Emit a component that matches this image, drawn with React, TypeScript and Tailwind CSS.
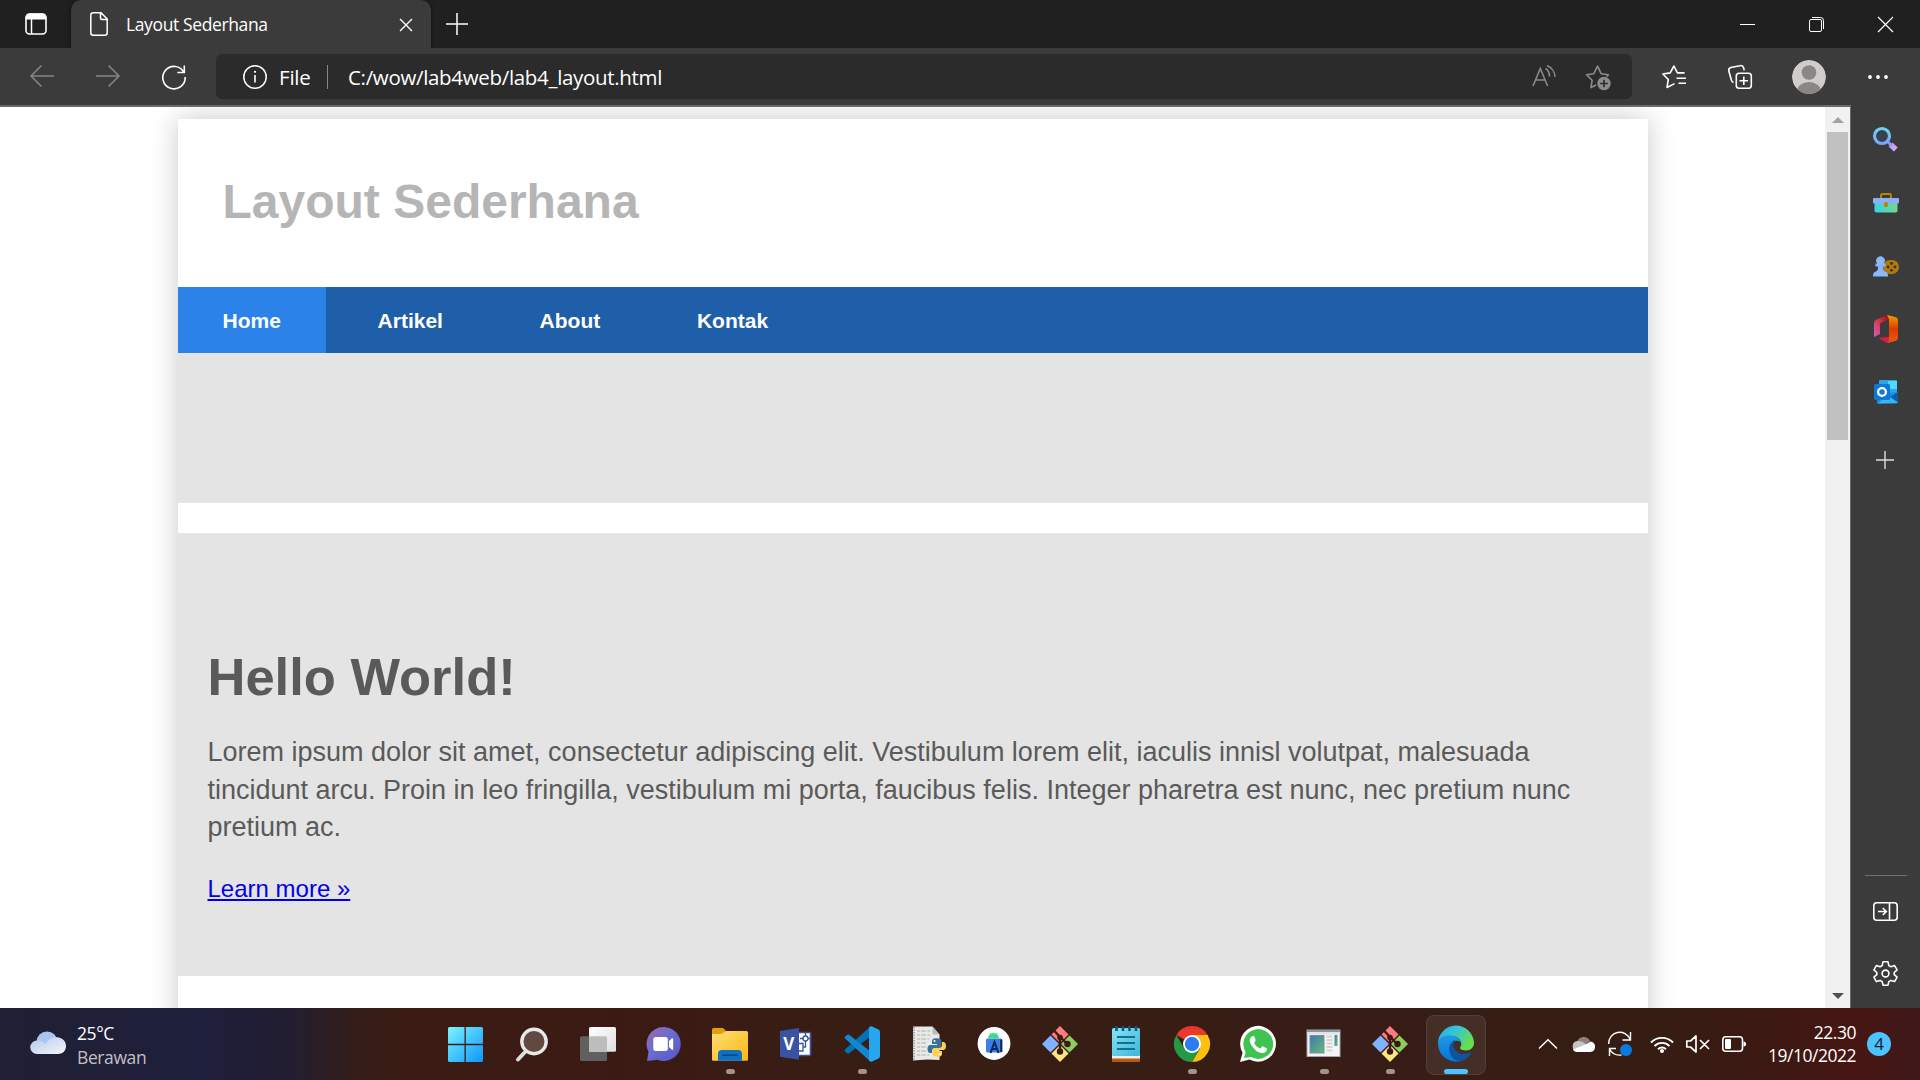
import type { ReactNode } from "react";

const UI = "font-['Open_Sans','Noto_Sans',sans-serif]";

function Icon({ w, h, className = "", children }: { w: number; h: number; className?: string; children: ReactNode }) {
  return (
    <svg width={w} height={h} viewBox={`0 0 ${w} ${h}`} fill="none" className={`block shrink-0 overflow-visible ${className}`}>
      {children}
    </svg>
  );
}

function TitleBar() {
  return (
    <div className="flex h-12 w-full items-start bg-[#202020]">
      <div className="flex h-12 w-[71px] shrink-0 items-center pl-[25px]">
        <Icon w={22} h={22}>
          <rect x="1" y="1" width="20" height="20" rx="3.5" stroke="#fff" strokeWidth="1.6" />
          <path d="M1 6V4.500A3.500 3.500 0 0 1 4.500 1h13A3.500 3.500 0 0 1 21 4.500V6z" fill="#fff" stroke="#fff" />
          <path d="M6.500 6v15" stroke="#fff" strokeWidth="1.500" />
        </Icon>
      </div>
      <div className="flex h-12 w-[360px] shrink-0 items-center rounded-t-[10px] bg-[#3b3b3b] pl-[19px] shadow-[0_0_4px_rgba(0,0,0,0.5)]">
        <Icon w={18} h={24}>
          <path d="M3 .8h8L17.200 7v13.700a2.500 2.500 0 0 1-2.500 2.500H3.300A2.500 2.500 0 0 1 .8 20.700V3.200A2.400 2.400 0 0 1 3.200.8zM10.500 1v5A1.500 1.500 0 0 0 12 7.500h5" stroke="#fff" strokeWidth="1.500" />
        </Icon>
        <span className="ml-[18px] w-[273px] text-[17.500px] leading-6 tracking-[-0.38px] whitespace-nowrap text-white">Layout Sederhana</span>
        <Icon w={14} h={14} className="mt-px">
          <path d="M1 1l12 12M13 1L1 13" stroke="#fff" strokeWidth="1.400" />
        </Icon>
      </div>
      <div className="flex h-12 items-center pl-[15px]">
        <Icon w={22} h={22} className="-mt-px">
          <path d="M11 0v22M0 11h22" stroke="#fff" strokeWidth="1.500" />
        </Icon>
      </div>
      <div className="ml-auto flex h-12 items-center gap-[54px] pr-[27px]">
        <Icon w={15} h={15}><path d="M0 7.500h15" stroke="#fff" /></Icon>
        <Icon w={15} h={15}>
          <rect x=".5" y="2.500" width="12" height="12" rx="1.500" stroke="#fff" />
          <path d="M3 .5h8.500a3 3 0 0 1 3 3V12" stroke="#fff" />
        </Icon>
        <Icon w={15} h={15}><path d="M0 0l15 15M15 0L0 15" stroke="#fff" strokeWidth="1.200" /></Icon>
      </div>
    </div>
  );
}

function ToolBar() {
  return (
    <div className="flex h-[57px] w-full items-center bg-[#3b3b3b]">
      <div className="flex w-[216px] shrink-0 items-center gap-[42px] pl-[30px]">
        <Icon w={24} h={22} className="-mt-px"><path d="M24 11H1M11.500 .5L1 11l10.500 10.500" stroke="#868686" strokeWidth="1.500" /></Icon>
        <Icon w={24} h={22} className="-mt-px"><path d="M0 11h23M12.500 .5L23 11 12.500 21.500" stroke="#868686" strokeWidth="1.500" /></Icon>
        <Icon w={24} h={24}>
          <path d="M22 7.500A11.200 11.200 0 1 0 23.200 12M22.300 .5v7h-7" stroke="#fff" strokeWidth="1.600" />
        </Icon>
      </div>
      <div className="flex h-[45px] w-[1416px] shrink-0 items-center rounded-md bg-[#2b2b2b] pl-[27px]">
        <Icon w={24} h={24}>
          <circle cx="12" cy="12" r="11.200" stroke="#fff" strokeWidth="1.500" />
          <path d="M12 10v7.500" stroke="#fff" strokeWidth="1.600" />
          <circle cx="12" cy="6.800" r="1.100" fill="#fff" />
        </Icon>
        <span className="ml-3 w-[48px] text-[20.500px] leading-7 tracking-[-0.2px] text-white">File</span>
        <span className="h-6 w-px bg-[#868686]" />
        <span className="ml-5 text-[20.500px] leading-7 tracking-[-0.32px] whitespace-nowrap text-white">C:/wow/lab4web/lab4_layout.html</span>
        <div className="ml-auto flex items-center gap-[29px] pr-[21px]">
          <Icon w={24} h={24}>
            <path d="M1 21L8.300 3.500 15.600 21M3.500 15h9.600M13.500 3.500c2.500 1.500 4 4.500 4 8M15 .5c4.500 2 8 6.500 8 11.500" stroke="#8c8c8c" strokeWidth="1.500" />
          </Icon>
          <Icon w={26} h={26}>
            <path d="M10.500 21.200L6 23.600l1.100-7.300-5.600-5.600 7.300-1L12.600 2.200l3.500 7.500 7.300 1-1.400 1.400" stroke="#8c8c8c" strokeWidth="1.600" strokeLinejoin="round" strokeLinecap="round" />
            <circle cx="19" cy="19.500" r="6.700" fill="#8c8c8c" />
            <path d="M19 15.700v7.600M15.200 19.500h7.600" stroke="#2b2b2b" strokeWidth="1.600" />
          </Icon>
        </div>
      </div>
      <div className="flex items-center pl-[30px]">
        <Icon w={24} h={24}>
          <path d="M12.500 18.600L5 22.500l1.300-8L.8 9l7.400-1.100L11.900 1l3.500 6.900h7.200M14.500 13.300H24M16.500 18.300H24" stroke="#fff" strokeWidth="1.600" strokeLinejoin="round" />
        </Icon>
        <Icon w={24} h={24} className="ml-[42px]">
          <rect x="8.300" y="8.300" width="15" height="15" rx="2.800" stroke="#fff" strokeWidth="1.600" />
          <path d="M15.800 11.500v8.600M11.500 15.800h8.600M5.500 17.500a3 3 0 0 1-2-2L.9 6.200A3 3 0 0 1 2.800 2.500L12 .7a3 3 0 0 1 3.600 2l.6 2.700" stroke="#fff" strokeWidth="1.600" />
        </Icon>
        <Icon w={34} h={34} className="ml-[40px]">
          <clipPath id="avatar"><circle cx="17" cy="17" r="17" /></clipPath>
          <g clipPath="url(#avatar)">
            <circle cx="17" cy="17" r="17" fill="#cfcdca" />
            <circle cx="17" cy="12.500" r="7.300" fill="#8a8684" />
            <ellipse cx="17" cy="31" rx="12" ry="9" fill="#8a8684" />
          </g>
        </Icon>
        <Icon w={20} h={4} className="ml-[42px]">
          <circle cx="2" cy="2" r="1.900" fill="#fff" />
          <circle cx="10" cy="2" r="1.900" fill="#fff" />
          <circle cx="18" cy="2" r="1.900" fill="#fff" />
        </Icon>
      </div>
    </div>
  );
}

const NAV = ["Home", "Artikel", "About", "Kontak"];

function WebPage() {
  return (
    <div className="flex h-full flex-1 justify-center overflow-hidden bg-white pt-3 font-['Liberation_Sans',Arial,sans-serif]">
      <div className="h-[1000px] w-[1470px] shrink-0 bg-white shadow-[0_0_26px_#c8c8c8]">
        <header className="flex h-[168px] items-center px-[45px] pb-[2px]">
          <h1 className="text-[48px] leading-[56px] font-bold text-[#b5b5b5]">Layout Sederhana</h1>
        </header>
        <nav className="flex h-[66px] gap-[6.700px] bg-[#1f5faa]">
          {NAV.map((n, i) => (
            <a key={n} className={`flex h-full items-center px-[45px] pt-[2px] text-[21px] font-bold text-white ${i === 0 ? "bg-[#2b83ea]" : ""}`}>{n}</a>
          ))}
        </nav>
        <section className="h-[150px] bg-[#e4e4e4]" />
        <section className="mt-[30px] h-[443px] bg-[#e4e4e4] px-[30px] pt-[112px]">
          <h1 className="text-[52.500px] leading-[64px] font-bold text-[#5a5a5a]">Hello World!</h1>
          <p className="mt-[25px] text-[27px] leading-[37.500px] text-[#5a5a5a]">
            Lorem ipsum dolor sit amet, consectetur adipiscing elit. Vestibulum lorem elit, iaculis innisl volutpat, malesuada<br />
            tincidunt arcu. Proin in leo fringilla, vestibulum mi porta, faucibus felis. Integer pharetra est nunc, nec pretium nunc<br />
            pretium ac.
          </p>
          <a className="mt-[27px] block w-fit text-[24px] leading-[30px] text-[#0000ee] underline">Learn more »</a>
        </section>
      </div>
    </div>
  );
}

function ScrollBar() {
  return (
    <div className="flex h-full w-[25px] shrink-0 flex-col items-center bg-[#f1f1f1]">
      <div className="flex h-[25px] items-center"><Icon w={12} h={6}><path d="M0 6L6 0l6 6z" fill="#a3a3a3" /></Icon></div>
      <div className="h-[308px] w-[21px] bg-[#c1c1c1]" />
      <div className="mt-auto flex h-[25px] items-center"><Icon w={12} h={6}><path d="M0 0l6 6 6-6z" fill="#505050" /></Icon></div>
    </div>
  );
}

function SideBar() {
  const cell = "flex h-[63px] items-center justify-center";
  return (
    <aside className="flex h-[903px] w-[70px] shrink-0 flex-col border-l border-[#6a6a6a] bg-[#3b3b3b] pt-[3px]">
      <div className={cell}>
        <Icon w={25} h={25}>
          <defs>
            <linearGradient id="lens" x1="0" y1="0" x2="0" y2="1"><stop stopColor="#6ed3ee" /><stop offset="1" stopColor="#7da4fb" /></linearGradient>
            <linearGradient id="handle" gradientUnits="userSpaceOnUse" x1="15" y1="16" x2="24" y2="24"><stop stopColor="#8f9cf8" /><stop offset="1" stopColor="#f0a8f0" /></linearGradient>
          </defs>
          <path d="M17.500 17.500l5.300 5" stroke="url(#handle)" strokeWidth="5.600" />
          <path d="M15 15l3 3" stroke="#7d9ff5" strokeWidth="3" />
          <circle cx="9" cy="9" r="7.500" stroke="url(#lens)" strokeWidth="3.200" fill="#34434d" />
        </Icon>
      </div>
      <div className={`${cell} pt-px`}>
        <Icon w={26} h={20}>
          <defs><linearGradient id="box" x1="0" y1="0" x2="1" y2="0"><stop stopColor="#35d3ea" /><stop offset="1" stopColor="#73d889" /></linearGradient></defs>
          <path d="M8 6V2.500Q8 1 9.500 1h7Q18 1 18 2.500V6" stroke="#b8860b" strokeWidth="2" />
          <path d="M1.500 9h23v8.500a2 2 0 0 1-2 2h-19a2 2 0 0 1-2-2z" fill="url(#box)" />
          <rect x="0" y="5" width="26" height="5.500" rx="1" fill="#8ab0f8" />
          <rect x="11" y="9" width="4" height="5" rx="1.500" fill="#b8860b" />
        </Icon>
      </div>
      <div className={cell}>
        <Icon w={26} h={22}>
          <rect x="10" y="5" width="16" height="14" rx="7" fill="#b17a0d" />
          <g fill="#3b3030"><circle cx="18.500" cy="8.500" r="1.400" /><circle cx="18.500" cy="15.300" r="1.400" /><circle cx="15" cy="12" r="1.400" /><circle cx="22" cy="12" r="1.400" /></g>
          <path d="M2.500 8.500h1.700A4.300 4.300 0 1 1 10.800 8.500h1.700v3H9.800c0 3 1 5 3.200 5.500 1.600.5 2 2 2 4.500H0c0-2.500.4-4 2-4.500 2.200-.5 3.200-2.500 3.200-5.500H2.500z" fill="#8ab8fb" />
        </Icon>
      </div>
      <div className={cell}>
        <Icon w={24} h={28}>
          <defs><linearGradient id="off1" x1="1" y1="0" x2="0" y2="1"><stop stopColor="#8e1010" /><stop offset=".5" stopColor="#d83650" /><stop offset="1" stopColor="#d060b8" /></linearGradient>
            <linearGradient id="off2" x1="0" y1="0" x2="0" y2="1"><stop stopColor="#f59a00" /><stop offset=".5" stopColor="#dd3b00" /><stop offset="1" stopColor="#ee5a10" /></linearGradient></defs>
          <path d="M14 0L2.500 4.500Q0 5.500 0 8v14l6-3V10q0-2 2-2.800L15 4z" fill="url(#off1)" />
          <path d="M5 22.500l10-.5v6h-2l-6.500-3.500z" fill="#d51e3a" />
          <path d="M13 0l9 2.200q2 .6 2 3v17.600q0 2.400-2 3L13.500 28l1.500-2V4z" fill="url(#off2)" />
        </Icon>
      </div>
      <div className={cell}>
        <Icon w={24} h={24}>
          <rect x="5" y="0" width="18" height="16" rx="1" fill="#28a8ea" />
          <path d="M14 1h9v8h-9z" fill="#50d9ff" />
          <path d="M3 14l21-2v9.500a2 2 0 0 1-2 2H3z" fill="#1490df" />
          <path d="M24 12v10l-8-5z" fill="#0a5ca8" />
          <path d="M4 23.500L24 23 13 15z" fill="#35b8f1" />
          <rect x="0" y="4" width="16" height="16" rx="1.500" fill="#0f78d4" />
          <circle cx="8" cy="12" r="3.900" stroke="#fff" strokeWidth="2.200" />
        </Icon>
      </div>
      <div className="flex h-[74px] items-center justify-center pr-px">
        <Icon w={18} h={18}><path d="M9 0v18M0 9h18" stroke="#ddd" strokeWidth="1.400" /></Icon>
      </div>
      <div className="mx-auto mt-auto h-px w-[42px] bg-[#717171]" />
      <div className="flex h-[70px] items-center justify-center">
        <Icon w={25} h={19}>
          <rect x=".8" y=".8" width="23.400" height="17.400" rx="3" stroke="#fff" strokeWidth="1.600" />
          <path d="M16.500 1v17M5 9.500h8M9.800 6l3.500 3.500L9.800 13" stroke="#fff" strokeWidth="1.600" />
        </Icon>
      </div>
      <div className="flex h-[62px] items-start justify-center pt-[15px]">
        <Icon w={25} h={25}>
          <path d="M10 .8h5l.8 3.800 2.100 1.200 3.700-1.200 2.500 4.300-2.900 2.600v2.200l2.900 2.500-2.500 4.400-3.700-1.200-2.100 1.200-.8 3.600h-5l-.8-3.600-2.100-1.200-3.700 1.200-2.500-4.400 2.900-2.500v-2.200L.9 8.900l2.500-4.300 3.700 1.200 2.100-1.200z" stroke="#fff" strokeWidth="1.600" strokeLinejoin="round" />
          <circle cx="12.500" cy="12.500" r="3.400" stroke="#fff" strokeWidth="1.600" />
        </Icon>
      </div>
    </aside>
  );
}

function GitIcon() {
  return (
    <>
      <g transform="rotate(45 19 18)">
        <rect x="6.200" y="5.200" width="12" height="12" rx="1" fill="#ff7b80" />
        <rect x="19.800" y="5.200" width="12" height="12" rx="1" fill="#8bd05c" />
        <rect x="6.200" y="18.800" width="12" height="12" rx="1" fill="#80b3ff" />
        <rect x="19.800" y="18.800" width="12" height="12" rx="1" fill="#ffe680" />
      </g>
      <path d="M12.500 4l6.500 7v14M19 10.500l6.500 7" stroke="#3a1c13" strokeWidth="2.600" />
      <circle cx="19" cy="11.500" r="3" fill="#3a1c13" />
      <circle cx="19" cy="25.500" r="3.200" fill="#3a1c13" />
      <circle cx="26.500" cy="18" r="3.200" fill="#3a1c13" />
    </>
  );
}

/** Same four tiles as the Git logo: red on top, green right, yellow bottom, blue left. */
function GitTiles() {
  return (
    <>
      <path d="M19 0l8.500 8.500L19 17l-8.500-8.500z" fill="#ff7b80" />
      <path d="M28.500 9.500L37 18l-8.500 8.500L20 18z" fill="#8bd05c" />
      <path d="M9.500 9.500L18 18l-8.500 8.500L1 18z" fill="#80b3ff" />
      <path d="M19 19l8.500 8.500L19 36l-8.500-8.500z" fill="#ffe680" />
      <path d="M12.500 4l6.500 7v14M19 10.500l6.500 7" stroke="#3a1c13" strokeWidth="2.400" />
      <circle cx="19" cy="11.500" r="2.800" fill="#3a1c13" />
      <circle cx="19" cy="25.500" r="3.200" fill="#3a1c13" />
      <circle cx="26.500" cy="18" r="3.200" fill="#3a1c13" />
    </>
  );
}

const APPS: { name: string; running?: boolean; art: ReactNode }[] = [
  {
    name: "start",
    art: (
      <>
        <defs><linearGradient id="win" gradientUnits="userSpaceOnUse" x1="1" y1="1" x2="36" y2="36"><stop stopColor="#7df3ff" /><stop offset="1" stopColor="#0c96fb" /></linearGradient></defs>
        <path d="M2.500 1h15v16.800H1V2.500A1.500 1.500 0 0 1 2.500 1zM18.800 1h15.700A1.500 1.500 0 0 1 36 2.500v15.300H18.800zM1 19.200h16.500V36h-15A1.500 1.500 0 0 1 1 34.500zM18.800 19.200H36v15.300a1.500 1.500 0 0 1-1.500 1.500H18.800z" fill="url(#win)" />
      </>
    ),
  },
  {
    name: "search",
    art: (
      <>
        <path d="M5 33.500L12 26" stroke="#dcdcdc" strokeWidth="4" strokeLinecap="round" />
        <circle cx="21" cy="15.500" r="12.200" fill="#63483f" stroke="#e9e9e9" strokeWidth="3.400" />
      </>
    ),
  },
  {
    name: "taskview",
    art: (
      <>
        <defs><linearGradient id="tv" x1="0" y1="0" x2="1" y2="1"><stop stopColor="#fff" /><stop offset="1" stopColor="#dedede" /></linearGradient></defs>
        <rect x="1" y="10.300" width="27" height="24.700" rx="1.500" fill="#606060" />
        <rect x="10" y="1" width="27" height="24.700" rx="1.500" fill="url(#tv)" />
        <path d="M10 10.300h16.500a1.500 1.500 0 0 1 1.500 1.500v13.900H11.500a1.500 1.500 0 0 1-1.500-1.500z" fill="#bdbdbd" />
      </>
    ),
  },
  {
    name: "chat",
    art: (
      <>
        <defs><linearGradient id="chat" x1="0" y1="0" x2="1" y2="1"><stop stopColor="#9a6ba8" /><stop offset=".45" stopColor="#6c6cd0" /><stop offset="1" stopColor="#5058c8" /></linearGradient></defs>
        <path d="M18.500 1a17 17 0 1 1-6 32.800L2 35l1.500-9A17 17 0 0 1 18.500 1z" fill="url(#chat)" />
        <rect x="8.300" y="11" width="14.500" height="14" rx="2.500" fill="#fff" />
        <path d="M24 15l3.200-3q1 0 1 1.500v9q0 1.500-1 1.500L24 21z" fill="#fff" />
      </>
    ),
  },
  {
    name: "explorer",
    running: true,
    art: (
      <>
        <defs><linearGradient id="fold" x1="0" y1="0" x2="1" y2="1"><stop stopColor="#ffdf72" /><stop offset="1" stopColor="#fbb716" /></linearGradient></defs>
        <path d="M1 3.500A1.500 1.500 0 0 1 2.500 2H12l4 4-3 5H1z" fill="#e2a10c" />
        <path d="M1 8h9.500l5-3h20A1.500 1.500 0 0 1 37 6.500v27a1.200 1.200 0 0 1-1.200 1.200H2.200A1.200 1.200 0 0 1 1 33.500z" fill="url(#fold)" />
        <path d="M7 34.700V28q0-4 4-4h16q4 0 4 4v6.700z" fill="#0f70c0" />
        <path d="M12 29.200h14" stroke="#0b4a85" strokeWidth="1.800" strokeLinecap="round" />
      </>
    ),
  },
  {
    name: "visio",
    art: (
      <>
        <rect x="14" y="6.500" width="19.500" height="23" rx="1" fill="#fff" stroke="#3953a4" strokeWidth="1.600" />
        <circle cx="28.500" cy="12.500" r="2.500" stroke="#3953a4" strokeWidth="1.300" />
        <path d="M28.500 7v3M31 12.500h2.500M28.500 15v6h-2.500M22 17.500h4v7.500h-4M23 12.500h3" stroke="#3953a4" strokeWidth="1.300" />
        <path d="M3 5l19-3v31.700l-19-3z" fill="#3953a4" />
        <text x="11.700" y="24" textAnchor="middle" fill="#fff" fontSize="17" fontWeight="700" fontFamily="Open Sans">V</text>
      </>
    ),
  },
  {
    name: "vscode",
    running: true,
    art: (
      <>
        <path d="M2 23.500L26.500 1.200 28 10 6.500 27a2 2 0 0 1-2.500 0l-2-1.600a1.500 1.500 0 0 1 0-2z" fill="#0072b8" />
        <path d="M2 12.500L26.500 34.800 28 26 6.500 9A2 2 0 0 0 4 9l-2 1.600a1.500 1.500 0 0 0 0 1.900z" fill="#1487d0" />
        <path d="M28 0l7.500 3.500q1.500.8 1.500 2.500v24q0 1.700-1.500 2.500L28 36l-2-1.500V1.500z" fill="#27a5ef" />
      </>
    ),
  },
  {
    name: "idle",
    art: (
      <>
        <path d="M4 .500h19.500l7 8V34l-12-.5L4 34.500z" fill="#e9e9e7" />
        <path d="M23.500 .500v8h7z" fill="#bbb" />
        <path d="M8 5h13M8 9h13M8 13h12M8 17h9M8 21h9M8 25h9M8 29h12" stroke="#c4c4c4" strokeWidth="1.300" strokeDasharray="3 1 5 1.500" />
        <path d="M5 1v33" stroke="#555" strokeDasharray="1.300 1.300" />
        <path d="M27.500 12.300c-4 0-4.500 1.500-4.500 3V18h5v1h-6.500c-2.500 0-3 2.500-3 4s.5 4 3 4H23v-2c0-2 1.500-3 3-3h4c2 0 2.500-1.500 2.500-2.500v-4.200c0-2-1.500-3-5-3z" fill="#376f9f" />
        <path d="M28.500 30.700c4 0 4.500-1.500 4.500-3V25h-5v-1h6c2.500 0 3-2.500 3-4s-.5-4-3-4h-1v3c0 2-1.500 3-3 3h-4c-2 0-2.500 1.500-2.500 2.500v3.200c0 2 1.500 3 5 3z" fill="#ffd04a" />
        <circle cx="25.500" cy="15" r="1" fill="#fff" /><circle cx="30.500" cy="28" r="1" fill="#fff" />
      </>
    ),
  },
  {
    name: "android",
    art: (
      <>
        <circle cx="19" cy="17.500" r="16.400" fill="#fff" />
        <rect x="11" y="12.500" width="16" height="14" rx="1.500" fill="#3f7de8" />
        <path d="M13 12.500a5.500 5.500 0 0 1 11 0z" fill="#3ddc84" />
        <path d="M15 7l1.500 2M22.500 7L21 9" stroke="#3ddc84" />
        <path d="M15.500 27l4-11 4 11M17 23h5" stroke="#0c2a52" strokeWidth="2" />
        <path d="M26.300 13.500v12.500" stroke="#0c2a52" strokeWidth="2.200" />
      </>
    ),
  },
  { name: "git", art: <GitTiles /> },
  {
    name: "notepad",
    art: (
      <>
        <defs><linearGradient id="note" x1="0" y1="0" x2="1" y2="1"><stop stopColor="#85e4f6" /><stop offset="1" stopColor="#3fb4d6" /></linearGradient></defs>
        <rect x="5" y="28" width="28" height="8" rx="1" fill="#b85a14" />
        <rect x="5" y="27" width="28" height="5.500" fill="#eee" />
        <rect x="5" y="2" width="28" height="28" rx="1.500" fill="url(#note)" />
        <path d="M9.500 0v5M16 0v5M22.500 0v5M29 0v5" stroke="#0e5a78" strokeWidth="2.600" />
        <path d="M10 11h18M10 17h18M10 23h18" stroke="#12708f" strokeWidth="1.800" />
      </>
    ),
  },
  {
    name: "chrome",
    running: true,
    art: (
      <>
        <path d="M19 18L3.400 9A18 18 0 0 1 34.600 9z" fill="#e8392c" />
        <path d="M19 18V9h15.600A18 18 0 0 1 19 36l8-13.500z" fill="#fdc10f" />
        <path d="M19 18l7.800 4.500L19 36A18 18 0 0 1 3.400 9l7.800 13.500z" fill="#249a46" />
        <circle cx="19" cy="18" r="9" fill="#fff" />
        <circle cx="19" cy="18" r="7.200" fill="#2c7cf0" />
      </>
    ),
  },
  {
    name: "whatsapp",
    art: (
      <>
        <path d="M1 36l2.600-9.200A17.900 17.900 0 1 1 10.500 33.500z" fill="#fff" />
        <path d="M5 32l1.700-6A14.900 14.900 0 1 1 12 31z" fill="#3fc351" />
        <path d="M13.500 10c-3 1.500-3.500 5-1.500 8.500 3 5 6.500 8 11 8.500 3 .3 5-1.500 5-4.500l-4.700-2.500-2 2.500c-3-1-5-3-6.200-5.700l1.700-2.200-1.500-4.300z" fill="#fff" />
      </>
    ),
  },
  {
    name: "winapp",
    running: true,
    art: (
      <>
        <defs><linearGradient id="wa" x1="0" y1="0" x2="1" y2="1"><stop stopColor="#3f77b0" /><stop offset="1" stopColor="#62bd77" /></linearGradient></defs>
        <rect x="2" y="4" width="33" height="26.500" fill="#f4f4f4" stroke="#9fa8b0" />
        <path d="M2 4h33v2.200H2z" fill="#8896a0" />
        <path d="M2 6h33v2.500H2z" fill="#dfe3e6" />
        <rect x="5" y="9.500" width="14" height="17.500" fill="url(#wa)" stroke="#7c8f98" />
        <path d="M21.500 10.500h6M21.500 14h6M21.500 17.500h6M21.500 21h6M21.500 24.500h6" stroke="#d4d4d4" strokeWidth="2" />
        <rect x="29.500" y="9" width="3" height="11" fill="url(#wa)" />
      </>
    ),
  },
  { name: "gitgui", running: true, art: <GitTiles /> },
  {
    name: "edge",
    running: true,
    art: (
      <>
        <defs>
          <linearGradient id="e1" x1="0" y1="0" x2="1" y2=".5"><stop stopColor="#2aa9e6" /><stop offset=".5" stopColor="#36c6d0" /><stop offset="1" stopColor="#66e04b" /></linearGradient>
          <linearGradient id="e2" x1="0" y1="0" x2="0" y2="1"><stop stopColor="#1d9be4" /><stop offset="1" stopColor="#0a72d8" /></linearGradient>
        </defs>
        <path d="M1 18A18 18 0 0 1 37 17c0 4.500-3.500 7.500-8 7.500-3.500 0-6-1-6-2.500 0-1 1.300-1.500 1.300-4 0-4-3.300-8-10-8C7 10 2 14 1 18z" fill="url(#e1)" />
        <path d="M1 18c0-5 5-8.700 11-8.700 7 0 11.500 3.700 12.200 7.700C22 13.500 15 14 14 20c-1 8 6 14 13 13.800A18 18 0 0 1 1 18z" fill="url(#e2)" />
        <path d="M17 14.500c-4 2.500-6 7-4 12.500 2.500 6.500 8 9 12 8 4-1.500 7-4 9-7.500.5-1-.3-1.300-1-1C25 30 16.500 26 16.500 19c0-2 .2-3.500 1.500-4.700z" fill="#0f54a0" />
      </>
    ),
  },
];

function TaskBar() {
  return (
    <footer className={`flex h-[72px] w-full items-center bg-[linear-gradient(90deg,#201f33_0px,#1e1f3c_200px,#221e30_290px,#331d1a_355px,#3a1c14_400px,#3b1a14_620px,#371e14_900px,#371d15_1300px,#351d14_1640px,#3b1912_1750px,#461613_1860px,#3d181a_1920px)] ${UI}`}>
      <div className="flex w-[432px] shrink-0 items-center pl-[30px]">
        <Icon w={36} h={24} className="-mt-[3px]">
          <defs><linearGradient id="cl" x1="0" y1="0" x2="1" y2="1"><stop stopColor="#b3c9ec" /><stop offset="1" stopColor="#f4f6fa" /></linearGradient></defs>
          <circle cx="17" cy="11" r="10.500" fill="#aac5f0" />
          <path d="M7 9.500q5 0 8.500 3.500 3-6 10-7c6 0 10.500 3.500 10.500 9 0 5-3.500 8-8 8H7A6.750 6.750 0 0 1 7 9.500z" fill="url(#cl)" />
        </Icon>
        <div className="ml-[11px] flex flex-col pt-[2px] text-[17.500px] leading-6 tracking-[-0.4px]">
          <span className="text-white">25°C</span>
          <span className="text-[#c3bfc4]">Berawan</span>
        </div>
      </div>
      <div className="flex shrink-0 pt-px pl-px">
        {APPS.map((a) => (
          <div key={a.name} className="flex w-[66px] justify-center">
            <div className={`flex h-[60px] w-[60px] flex-col items-center rounded-lg ${a.name === "edge" ? "bg-white/8 outline -outline-offset-1 outline-white/8" : ""}`}>
              <Icon w={36} h={36} className="mt-[11px] mr-[2px]">{a.art}</Icon>
              {a.running && <span className={`mt-[7px] h-[5px] rounded-full ${a.name === "edge" ? "w-6 bg-[#4cc2ff]" : "w-[9px] bg-[#a09490]"}`} />}
            </div>
          </div>
        ))}
      </div>
      <div className="ml-[50px] flex flex-1 items-center">
        <Icon w={18} h={10}><path d="M0 9.500L9 .7l9 8.800" stroke="#fff" strokeWidth="1.500" /></Icon>
        <Icon w={24} h={16} className="ml-[15px]">
          <path d="M5 6a7 7 0 0 1 13-1l-6 5z" fill="#8b8180" />
          <path d="M5.500 5C10 4.500 13 8 17 10L5 15.500A5.300 5.300 0 0 1 5.500 5z" fill="#c9c2c1" />
          <path d="M18.500 5.500a5.300 5.300 0 0 1 0 10.500H5c-2 0-3.500-1-4-2.500L14.500 8z" fill="#fff" />
        </Icon>
        <Icon w={24} h={24} className="ml-3">
          <path d="M.7 12A11 11 0 0 1 22 7.500M22.500 0v8h-8M1.500 24v-7.500H8M1.500 17c2 4 6 6.700 12 6" stroke="#fff" strokeWidth="1.400" />
          <circle cx="18" cy="18" r="6" fill="#0a7ae0" />
        </Icon>
        <Icon w={24} h={18} className="-mt-px ml-[18px]">
          <path d="M1 7.500a15.500 15.500 0 0 1 22 0M4.500 11a10.500 10.500 0 0 1 15 0M8 14.200a5.700 5.700 0 0 1 8 0" stroke="#fff" strokeWidth="1.900" />
          <circle cx="12" cy="16" r="2" fill="#fff" />
        </Icon>
        <Icon w={24} h={18} className="ml-3">
          <path d="M.8 6H4.500L10 1v16L4.500 12H.8zM14 5l9 9M23 5l-9 9" stroke="#fff" strokeWidth="1.700" strokeLinejoin="round" />
        </Icon>
        <Icon w={24} h={16} className="ml-3">
          <rect x=".8" y=".8" width="19.700" height="14.400" rx="3" stroke="#fff" strokeWidth="1.600" />
          <rect x="3" y="3" width="6" height="10" rx="1" fill="#fff" />
          <path d="M21.500 5.500q2.500 0 2.500 2.500t-2.500 2.500z" fill="#fff" />
        </Icon>
        <div className="flex w-[110px] flex-col text-right text-[17.500px] leading-[23px] tracking-[-0.48px] whitespace-nowrap text-white">
          <span>22.30</span>
          <span>19/10/2022</span>
        </div>
        <span className="ml-[11px] flex h-6 w-6 items-center justify-center rounded-full bg-[#4cc2ff] text-[17px] leading-6 text-[#1a1a1a]">4</span>
      </div>
    </footer>
  );
}

export default function App() {
  return (
    <div className={`flex h-[1080px] w-[1920px] flex-col overflow-hidden bg-[#3b3b3b] ${UI}`}>
      <TitleBar />
      <ToolBar />
      <div className="flex h-[903px] shrink-0">
        <div className="flex h-full w-[1850px] shrink-0 border-t-2 border-[#6a6a6a]">
          <WebPage />
          <ScrollBar />
        </div>
        <SideBar />
      </div>
      <TaskBar />
    </div>
  );
}
